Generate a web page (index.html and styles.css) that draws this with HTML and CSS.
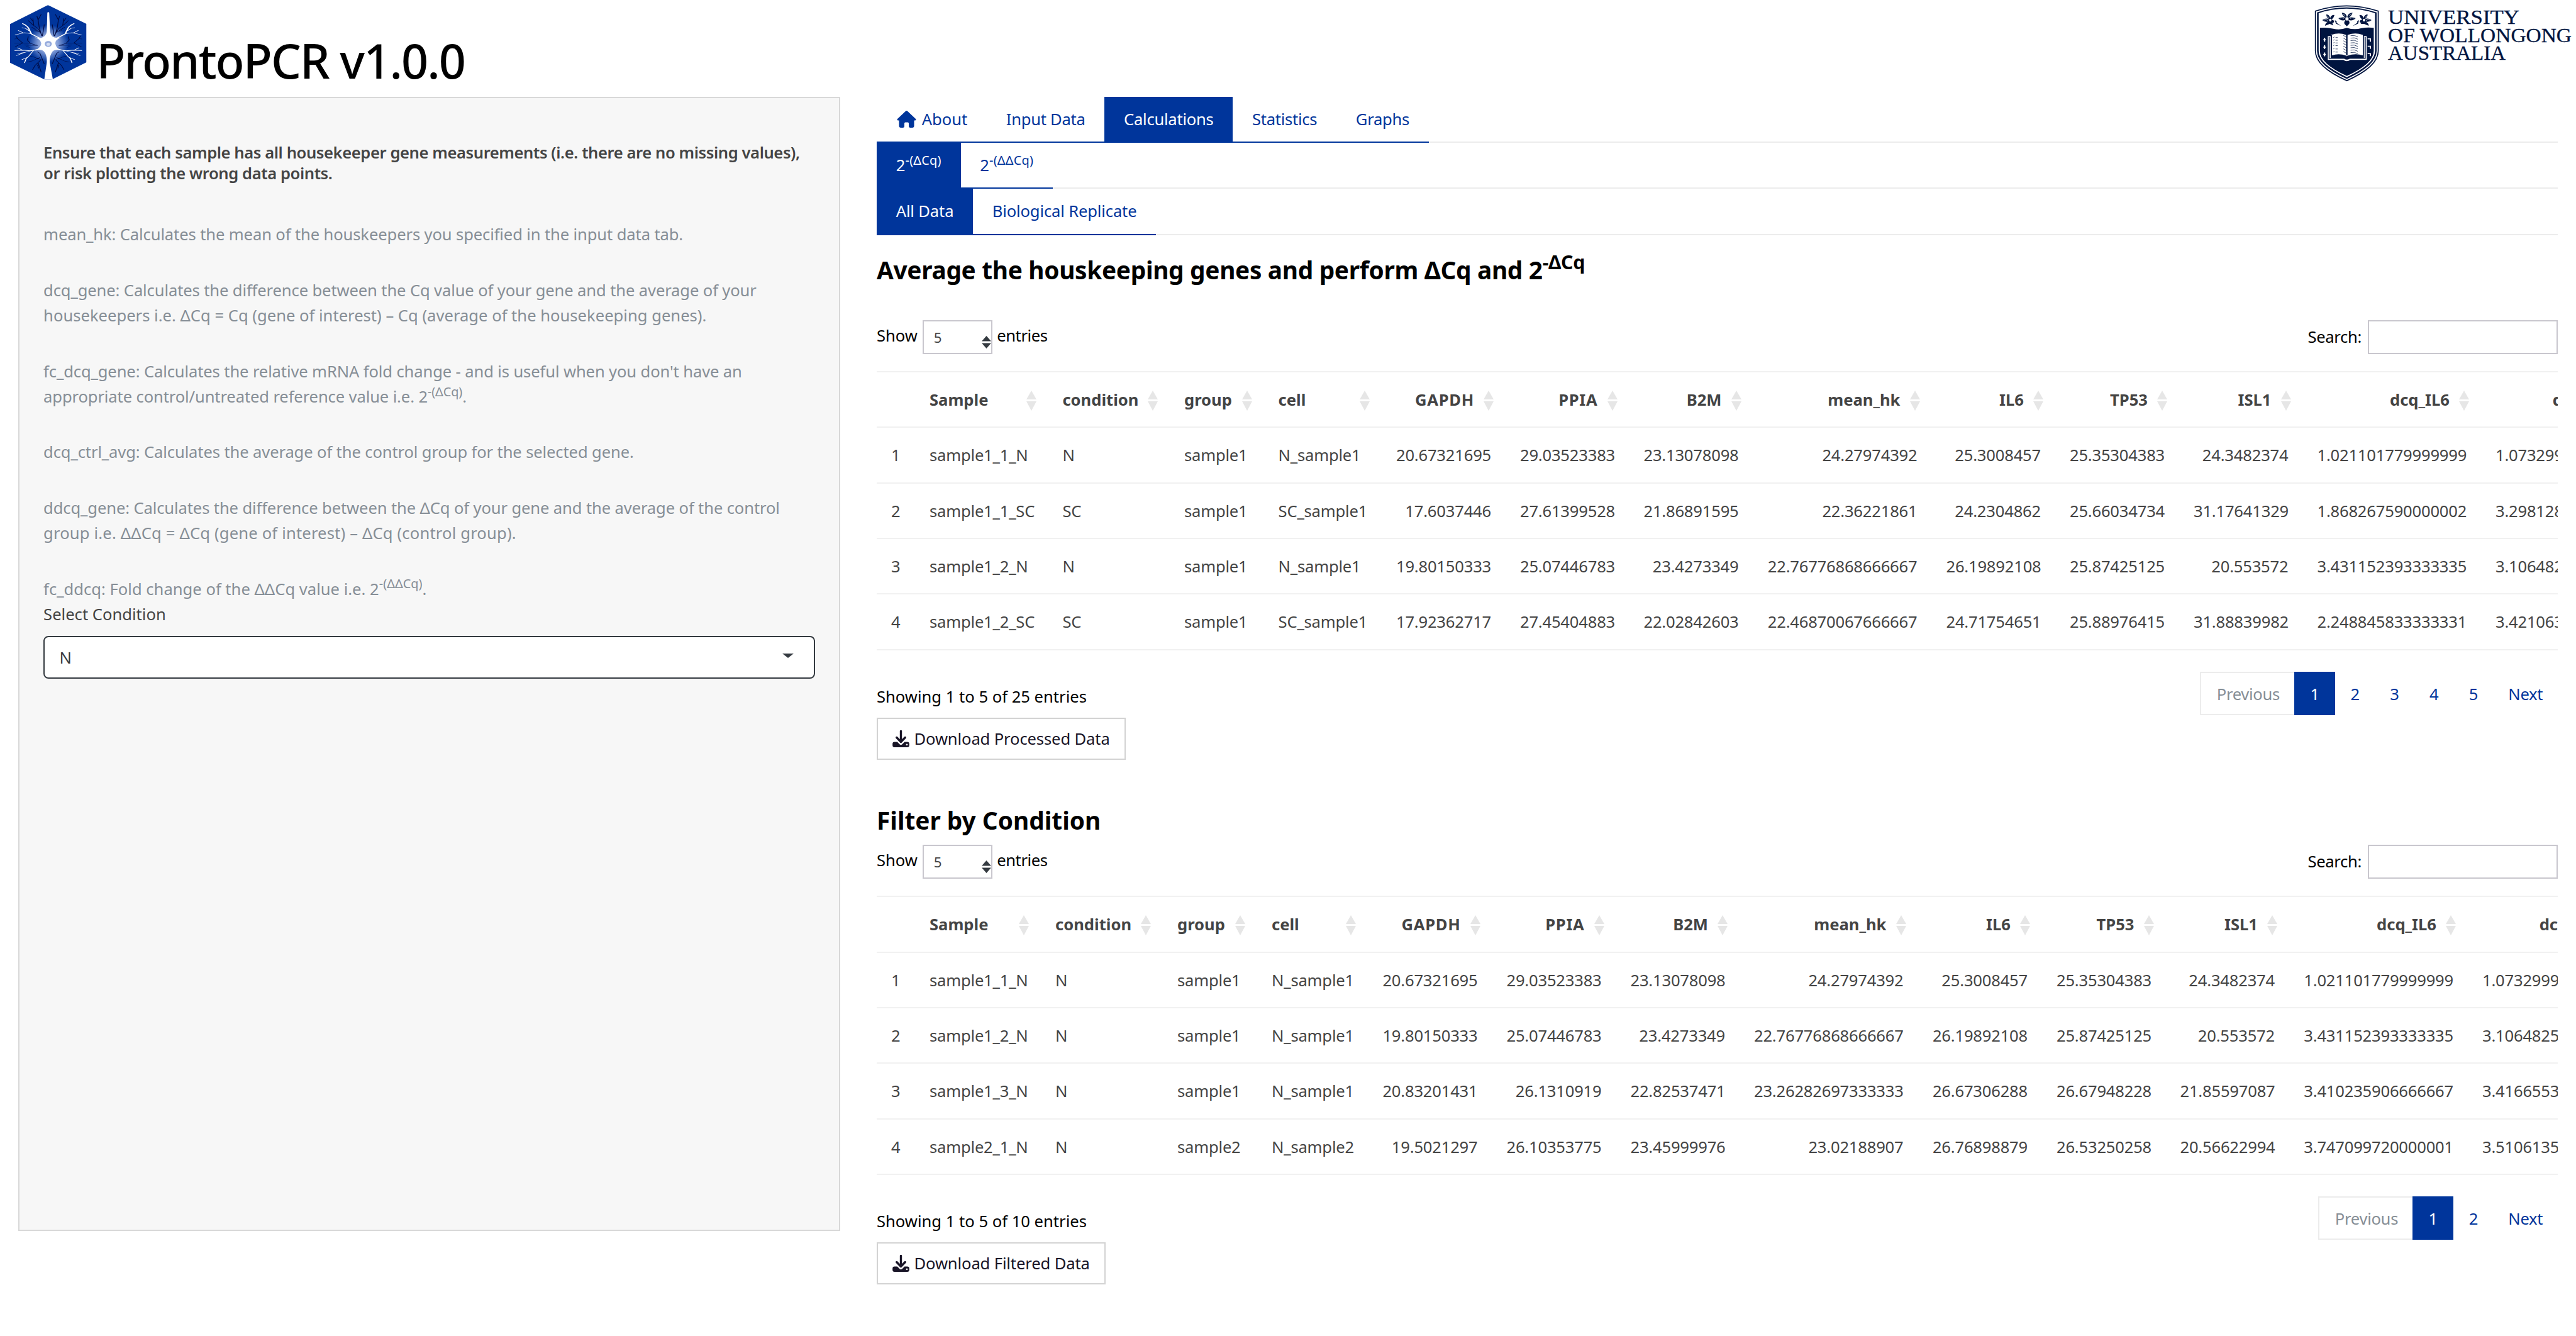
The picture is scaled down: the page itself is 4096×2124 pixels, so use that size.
FILE: index.html
```html
<!DOCTYPE html>
<html lang="en">
<head>
<meta charset="utf-8">
<title>ProntoPCR</title>
<link rel="stylesheet" href="styles.css">
</head>
<body>
<svg width="0" height="0" class="defs">
  <defs>
    <symbol id="download" viewBox="0 0 27 27">
      <path d="M13.5 1.5v15M6.8 11.5l6.7 7 6.7-7" fill="none" stroke="#191527" stroke-width="3.4" stroke-linecap="round" stroke-linejoin="round"/>
      <path fill-rule="evenodd" d="M3.4 18.5h4.3l4 4q1.8 1.6 3.6 0l4-4h4.3q3.2 0 3.2 3.2v2.1q0 3.2-3.2 3.2H3.4Q.2 27 .2 23.8v-2.1q0-3.2 3.2-3.2zM23 21.4a1.4 1.4 0 1 0 .01 0z" fill="#191527"/>
    </symbol>
  </defs>
</svg>
<header class="header">
  <div class="brand">
    <svg class="brand-logo" viewBox="33 39 248 569" preserveAspectRatio="none">
      <defs>
        <radialGradient id="glow" cx="157" cy="325" r="1" gradientUnits="userSpaceOnUse" gradientTransform="translate(157 325) scale(66 140) translate(-157 -325)">
          <stop offset="0" stop-color="#cfdcf5"/><stop offset=".5" stop-color="#7f9ad6"/><stop offset="1" stop-color="#00359b"/>
        </radialGradient>
        <g id="dark-half">
          <path d="M176 270L190 215L208 185L222 155M180 108L190 150L186 210L178 270M190 150L194 120M207 140L204 190M215 135L207 160M200 230L188 236M176 270L170 185M210 205L186 240"/>
          <path d="M192 340L215 325L240 322L266 322M215 325L225 300L222 275M240 322L256 290L266 292M256 290L262 270M240 322L264 350M228 348L218 355M192 340L234 338"/>
          <path d="M170 478L184 400L192 388M176 450L200 430L222 415M184 430L208 455L225 465M182 450L200 490L208 522M190 470L180 540M192 486L188 510"/>
        </g>
        <g id="white-half">
          <path stroke-width="4.5" d="M172 300Q195 275 212 254L221 212Q226 192 240 178"/>
          <path stroke-width="3" d="M212 254Q235 240 243 250L264 261M238 247L254 229M220 230L230 214L242 208"/>
          <path stroke-width="4.5" d="M172 355Q190 372 214 380L240 376L265 378"/>
          <path stroke-width="3" d="M205 378L220 420L229 440L234 470M225 430L242 446M214 380L238 396L260 416M236 394L256 400M240 376L256 358"/>
        </g>
      </defs>
      <path d="M156 39L281 180V466L157 608L33 469V181Z" fill="#00359b"/>
      <ellipse cx="157" cy="325" rx="66" ry="140" fill="url(#glow)"/>
      <g class="dendrites dark"><use href="#dark-half"/><use href="#dark-half" transform="translate(314 0) scale(-1 1)"/></g>
      <path fill="#fff" d="M154 95Q157 88 160 95L163 240Q166 285 186 284L198 282Q178 300 180 328Q182 362 200 378Q178 365 171 385Q160 420 162 470L172 595L157 610L144 595L152 470Q154 415 143 385Q134 365 114 380Q136 350 134 322Q132 292 112 280L132 286Q150 275 152 240Z"/>
      <g class="dendrites white"><use href="#white-half"/><use href="#white-half" transform="translate(314 0) scale(-1 1)"/></g>
      <ellipse cx="157" cy="329" rx="11.5" ry="22" fill="#93a9dc"/><ellipse cx="157" cy="331" rx="6" ry="12" fill="#d5def3"/>
    </svg>
    <h1 class="title">ProntoPCR v1.0.0</h1>
  </div>
  <svg class="uow" viewBox="0 0 416 140">
    <g transform="translate(-32 0) scale(.28533 .21333)">
      <path class="navy" d="M115 80Q290 0 471 80V380Q471 500 293 606Q115 500 115 380Z"/>
      <path class="paper" d="M121 86Q290 10 465 86V380Q465 494 293 596Q121 494 121 380Z"/>
      <path class="navy" d="M127 92Q290 17 459 92V380Q459 488 293 588Q127 488 127 380Z"/>
      <path class="paper" d="M136 98Q290 32 450 98V380Q450 478 293 575Q136 478 136 380Z"/>
      <path class="navy" d="M143 208Q180 202 218 214Q256 226 293 207Q335 226 375 210Q410 202 443 208V380Q443 475 293 566Q143 475 143 380Z"/>
      <g class="navy">
        <path d="M293 138Q268 120 265 95Q290 95 294 130Q300 95 325 95Q320 120 296 140Q318 118 342 136Q325 160 300 148Q312 165 306 178L293 196L280 178Q275 165 287 148Q262 160 246 136Q270 118 293 138Z"/>
        <ellipse cx="294" cy="141" rx="9" ry="13" fill="#fff"/>
        <path d="M254 135Q265 128 276 137M334 135Q322 128 312 137M272 102L283 118M318 102L306 118" class="thin-paper"/>
      </g>
      <g class="navy">
        <path d="M196 145Q178 128 178 108Q196 108 200 135Q206 110 224 112Q220 135 208 146Q224 148 222 165L212 172L218 190L198 178L172 192Q172 172 188 162Q170 166 156 150Q176 130 196 145Z"/>
        <path d="M391 145Q409 128 409 108Q391 108 387 135Q381 110 363 112Q367 135 379 146Q363 148 365 165L375 172L369 178L389 178L415 192Q415 172 399 162Q417 166 431 150Q411 130 391 145Z"/>
        <ellipse cx="201" cy="150" rx="7" ry="10" fill="#fff"/><ellipse cx="389" cy="150" rx="7" ry="10" fill="#fff"/>
        <path d="M226 150L236 158V170L262 195L232 176Z M361 150L351 158V170L325 195L356 176Z"/>
        <path d="M164 150Q178 142 188 152M182 116L192 130M424 150Q410 142 400 152M405 116L396 130" class="thin-paper"/>
      </g>
      <path class="paper" d="M187 270H205V260Q250 240 288 260L293 268L298 260Q340 240 382 260V270H404V446H312Q293 466 274 446H187Z"/>
      <path class="navy" d="M192 276H197V432H392V276H398V438H308Q293 450 279 438H192Z"/>
      <path class="navy" d="M203 262H210V412Q250 395 290 415L293 420L297 415Q340 395 382 412V262H388V434H312Q293 448 276 434H203Z"/>
      <path class="navy" d="M289 262H297V412H289Z"/>
      <g class="script">
        <path d="M218 280l6-5M218 300l6-5M218 320l6-5M218 340l6-5M218 365l6-5M218 388l6-5M230 280h12M230 300h12M230 320h12M230 340h12M230 365h12M230 388h12"/>
        <path d="M274 264l18 14M274 284l18 14M274 304l18 14M274 324l18 14M274 344l18 14M274 364l18 14M274 384l18 14"/>
        <path d="M314 266q20-8 40 8M314 284q20-8 40 8M314 302q20-8 40 8M314 320q20-8 40 8M314 338q20-8 40 8M314 356q20-8 40 8M314 374q20-8 40 8M314 392q20-8 40 8"/>
      </g>
      <g class="clasps">
        <path d="M162 297h14M169 282v29M162 351h14M169 336v29M162 406h14M169 391v29"/>
        <path d="M409 290h15v20M409 345h15v18M409 400h15v18"/>
      </g>
    </g>
    <text class="uow-text" x="117" y="38.1" textLength="209" lengthAdjust="spacingAndGlyphs">UNIVERSITY</text>
    <text class="uow-text" x="117" y="66.7" textLength="292" lengthAdjust="spacingAndGlyphs">OF WOLLONGONG</text>
    <text class="uow-text" x="117" y="95.3" textLength="187" lengthAdjust="spacingAndGlyphs">AUSTRALIA</text>
  </svg>
</header>

<div class="layout">
  <aside class="sidebar">
    <h5 class="warning">Ensure that each sample has all housekeeper gene measurements (i.e. there are no missing values),<br>or risk plotting the wrong data points.</h5>
    <p class="help">mean_hk: Calculates the mean of the houskeepers you specified in the input data tab.</p>
    <p class="help">dcq_gene: Calculates the difference between the Cq value of your gene and the average of your<br><span class="formula">housekeepers i.e. ΔCq = Cq (gene of interest) – Cq (average of the housekeeping genes).</span></p>
    <p class="help">fc_dcq_gene: Calculates the relative mRNA fold change - and is useful when you don't have an<br>appropriate control/untreated reference value i.e. 2<sup>-(ΔCq)</sup>.</p>
    <p class="help">dcq_ctrl_avg: Calculates the average of the control group for the selected gene.</p>
    <p class="help">ddcq_gene: Calculates the difference between the ΔCq of your gene and the average of the control<br><span class="formula wide">group i.e. ΔΔCq = ΔCq (gene of interest) – ΔCq (control group).</span></p>
    <p class="help last"><span class="formula">fc_ddcq: Fold change of the ΔΔCq value i.e. 2<sup>-(ΔΔCq)</sup>.</span></p>
    <label class="field-label">Select Condition</label>
    <div class="select"><span>N</span><i class="caret"></i></div>
  </aside>

  <main class="content">
    <nav class="tabs">
      <a class="tab tab-about"><svg class="home" viewBox="0 0 31 27"><path d="M15.5 0Q16.3 0 17 .7L30 13Q31.5 15.5 28.5 15.5H27.5V24Q27.5 27 24.5 27H21.5Q19 27 19 24.5V20Q19 18.5 17.5 18.5H13.5Q12 18.5 12 20V24.5Q12 27 9.500 27H6.5Q3.5 27 3.5 24V15.5H2.5Q-.5 15.5 1 13L14 .7Q14.7 0 15.5 0Z"/></svg>About</a>
      <a class="tab">Input Data</a>
      <a class="tab active">Calculations</a>
      <a class="tab">Statistics</a>
      <a class="tab">Graphs</a>
    </nav>
    <nav class="tabs tabs-power">
      <a class="tab active"><span>2<sup>-(ΔCq)</sup></span></a>
      <a class="tab"><span>2<sup>-(ΔΔCq)</sup></span></a>
    </nav>
    <nav class="tabs tabs-scope">
      <a class="tab active">All Data</a>
      <a class="tab">Biological Replicate</a>
    </nav>

    <section class="panel">
      <h4 class="heading heading-formula">Average the houskeeping genes and perform ΔCq and 2<sup>-ΔCq</sup></h4>
      <div class="controls controls-first">
        <div class="length"><span>Show</span><span class="length-select">5<svg viewBox="0 0 15 20"><path d="M7.5 0L15 8.5H0zM7.5 20L15 11.5H0z"/></svg></span><span class="unit">entries</span></div>
        <div class="search"><span>Search:</span><span class="search-box"></span></div>
      </div>
      <div class="table table-all">
        <div class="row head"><b></b><b>Sample</b><b>condition</b><b>group</b><b>cell</b><b class="caps">GAPDH</b><b class="caps">PPIA</b><b>B2M</b><b>mean_hk</b><b>IL6</b><b>TP53</b><b>ISL1</b><b>dcq_IL6</b><b>dcq_TP53</b></div>
        <div class="row"><i>1</i><i>sample1_1_N</i><i>N</i><i>sample1</i><i>N_sample1</i><i>20.67321695</i><i>29.03523383</i><i>23.13078098</i><i>24.27974392</i><i>25.3008457</i><i>25.35304383</i><i>24.3482374</i><i>1.021101779999999</i><i>1.0732999</i></div>
        <div class="row"><i>2</i><i>sample1_1_SC</i><i>SC</i><i>sample1</i><i>SC_sample1</i><i>17.6037446</i><i>27.61399528</i><i>21.86891595</i><i>22.36221861</i><i>24.2304862</i><i>25.66034734</i><i>31.17641329</i><i>1.868267590000002</i><i>3.298128</i></div>
        <div class="row"><i>3</i><i>sample1_2_N</i><i>N</i><i>sample1</i><i>N_sample1</i><i>19.80150333</i><i>25.07446783</i><i>23.4273349</i><i>22.76776868666667</i><i>26.19892108</i><i>25.87425125</i><i>20.553572</i><i>3.431152393333335</i><i>3.106482</i></div>
        <div class="row"><i>4</i><i>sample1_2_SC</i><i>SC</i><i>sample1</i><i>SC_sample1</i><i>17.92362717</i><i>27.45404883</i><i>22.02842603</i><i>22.46870067666667</i><i>24.71754651</i><i>25.88976415</i><i>31.88839982</i><i>2.248845833333331</i><i>3.421063</i></div>
      </div>
      <div class="footer">
        <div class="footer-info"><div class="info">Showing 1 to 5 of 25 entries</div><a class="button"><svg><use href="#download"/></svg>Download Processed Data</a></div>
        <div class="pager"><a class="off">Previous</a><a class="on">1</a><a>2</a><a>3</a><a>4</a><a>5</a><a>Next</a></div>
      </div>
    </section>

    <section class="panel panel-filter">
      <h4 class="heading">Filter by Condition</h4>
      <div class="controls">
        <div class="length"><span>Show</span><span class="length-select">5<svg viewBox="0 0 15 20"><path d="M7.5 0L15 8.5H0zM7.5 20L15 11.5H0z"/></svg></span><span class="unit">entries</span></div>
        <div class="search"><span>Search:</span><span class="search-box"></span></div>
      </div>
      <div class="table table-filtered">
        <div class="row head"><b></b><b>Sample</b><b>condition</b><b>group</b><b>cell</b><b class="caps">GAPDH</b><b class="caps">PPIA</b><b>B2M</b><b>mean_hk</b><b>IL6</b><b>TP53</b><b>ISL1</b><b>dcq_IL6</b><b>dcq_TP53</b></div>
        <div class="row"><i>1</i><i>sample1_1_N</i><i>N</i><i>sample1</i><i>N_sample1</i><i>20.67321695</i><i>29.03523383</i><i>23.13078098</i><i>24.27974392</i><i>25.3008457</i><i>25.35304383</i><i>24.3482374</i><i>1.021101779999999</i><i>1.0732999</i></div>
        <div class="row"><i>2</i><i>sample1_2_N</i><i>N</i><i>sample1</i><i>N_sample1</i><i>19.80150333</i><i>25.07446783</i><i>23.4273349</i><i>22.76776868666667</i><i>26.19892108</i><i>25.87425125</i><i>20.553572</i><i>3.431152393333335</i><i>3.1064825</i></div>
        <div class="row"><i>3</i><i>sample1_3_N</i><i>N</i><i>sample1</i><i>N_sample1</i><i>20.83201431</i><i>26.1310919</i><i>22.82537471</i><i>23.26282697333333</i><i>26.67306288</i><i>26.67948228</i><i>21.85597087</i><i>3.410235906666667</i><i>3.4166553</i></div>
        <div class="row"><i>4</i><i>sample2_1_N</i><i>N</i><i>sample2</i><i>N_sample2</i><i>19.5021297</i><i>26.10353775</i><i>23.45999976</i><i>23.02188907</i><i>26.76898879</i><i>26.53250258</i><i>20.56622994</i><i>3.747099720000001</i><i>3.5106135</i></div>
      </div>
      <div class="footer">
        <div class="footer-info"><div class="info">Showing 1 to 5 of 10 entries</div><a class="button"><svg><use href="#download"/></svg>Download Filtered Data</a></div>
        <div class="pager"><a class="off">Previous</a><a class="on">1</a><a>2</a><a>Next</a></div>
      </div>
    </section>
  </main>
</div>
</body>
</html>
```
FILE: styles.css
```css
* { box-sizing: border-box; }
body {
  margin: 0;
  width: 4096px;
  height: 2124px;
  overflow: hidden;
  background: #fff;
  color: #000;
  font-family: "Noto Sans", "Open Sans", sans-serif;
  font-size: 25.6px;
  white-space: nowrap;
}
h1, h4, h5, p { margin: 0; }
sup { font-size: 78%; line-height: 0; vertical-align: baseline; position: relative; top: -.52em; }
.defs { display: block; position: absolute; }

.header { display: flex; justify-content: space-between; height: 153.7px; }
.brand { display: flex; padding-left: 16px; }
.brand-logo { display: block; width: 121.5px; height: 121.3px; margin-top: 8.3px; clip-path: inset(0 0 3px 0); }
.dendrites { fill: none; stroke-linecap: round; stroke-linejoin: round; }
.dendrites path { vector-effect: non-scaling-stroke; }
.dark { stroke: #000c46; stroke-width: 2.6px; }
.white { stroke: #fff; }
.title { margin-left: 16px; padding-top: 50px; font-size: 75.5px; line-height: 92.2px; font-weight: 500; letter-spacing: -1.95px; }
.uow { display: block; width: 416px; height: 140px; }
.navy { fill: #00143f; }
.paper { fill: #fff; }
.thin-paper { fill: none; stroke: #fff; stroke-width: 3; }
.script { fill: none; stroke: #00143f; stroke-width: 3; }
.clasps { fill: none; stroke: #fff; stroke-width: 7; }
.uow-text { font-family: "Liberation Serif", serif; font-size: 31px; fill: #00143f; stroke: #00143f; stroke-width: .3px; }

.layout { display: flex; align-items: flex-start; }
.sidebar {
  width: 1307.8px;
  height: 1803.8px;
  margin-left: 28.7px;
  padding: 71.7px 38.4px 0;
  border: 2px solid #d8d8d8;
  background: #f7f7f7;
}
.warning { line-height: 32.26px; font-size: 25.6px; font-weight: 600; letter-spacing: -.42px; color: #444; margin-bottom: 61.4px; }
.help { line-height: 40.32px; letter-spacing: -.13px; color: #868e96; margin-bottom: 48.2px; }
.formula { letter-spacing: 0; }
.formula.wide { letter-spacing: .16px; }
.help.last { margin-bottom: 0; }
.field-label { display: block; line-height: 40.32px; color: #444; }
.select {
  display: flex;
  align-items: center;
  justify-content: space-between;
  height: 67.3px;
  margin-top: 13.9px;
  padding: 0 32px 0 23.5px;
  border: 2px solid #343a40;
  border-radius: 8px;
  background: #fff;
  color: #343a40;
}
.select span { padding-top: 2px; }
.caret { border: 9px solid transparent; border-top: 7px solid #343a40; border-bottom: 0; margin-top: -5px; }

.content { width: 2673.5px; margin-left: 57.5px; }
.tabs { display: flex; height: 73.4px; box-shadow: inset 0 -2px #ececec; letter-spacing: -.27px; }
.tabs-power { letter-spacing: .2px; }
.tabs-scope { letter-spacing: -.15px; }
.tab {
  display: flex;
  padding: 0 30.72px;
  line-height: 72px;
  border-bottom: 2.3px solid #00359b;
  color: #00359b;
}
.tab-about { letter-spacing: 0; }
.tab.active { background: #00359b; color: #fff; }
.home { width: 31px; height: 27px; margin: 22.3px 9px 0 1px; fill: #00359b; }
.heading { margin-top: 31.3px; font-size: 38.8px; line-height: 48.4px; font-weight: 700; }
.heading-formula { letter-spacing: -.31px; }
.panel-filter .heading { margin-top: 71.8px; }
.controls { display: flex; justify-content: space-between; height: 54.2px; margin-top: 14.5px; }
.controls-first { margin-top: 55px; }
.length { display: flex; line-height: 49.4px; }
.length-select {
  display: flex;
  justify-content: space-between;
  width: 111.4px;
  height: 54.2px;
  margin: 0 7px 0 7.8px;
  padding-left: 16px;
  border: 2px solid #c9c7ce;
  font-size: 22.4px;
  line-height: 52px;
  color: #444;
}
.length-select svg { width: 15px; height: 20px; margin-top: 23px; fill: #343a40; }
.unit { letter-spacing: -.4px; }
.search { display: flex; line-height: 53.6px; letter-spacing: -.35px; }
.search-box { width: 302px; height: 54.4px; margin-left: 10.5px; border: 2px solid #c9c7ce; }

.table { margin-top: 27.4px; overflow: hidden; border-bottom: 2px solid #f1f1f1; color: #444; letter-spacing: -.2px; }
.row { display: grid; height: 88.32px; border-top: 2px solid #f1f1f1; line-height: 87.6px; }
.table-all .row { grid-template-columns: 61px 211.4px 193.6px 149.6px 187.4px 197px 196.5px 197px 284px 196.5px 197px 196.5px 283.5px 283.5px; }
.table-filtered .row { grid-template-columns: 61px 200px 194px 150px 176px 197.5px 197px 196.5px 283.5px 197.5px 196.5px 196.5px 284px 261px; }
.row > * { padding: 0 23px; font-style: normal; text-align: right; }
.row > :nth-child(-n+5) { text-align: left; }
.row > i:last-child { text-align: left; }
.head > b { position: relative; padding-right: 50px; font-weight: 700; letter-spacing: 0; }
.head > .caps { letter-spacing: .7px; }
.head > b:last-child { padding: 0 0 0 113.7px; text-align: left; }
.head > b:not(:first-child)::before, .head > b:not(:first-child)::after {
  content: "";
  position: absolute;
  right: 18.7px;
  border: 8.7px solid transparent;
}
.head > b::before { top: 29px; border-top: 0 !important; border-bottom: 14.8px solid #e6e6e6 !important; }
.head > b::after { top: 45.9px; border-bottom: 0 !important; border-top: 15px solid #e6e6e6 !important; }

.footer { display: flex; justify-content: space-between; align-items: flex-start; padding-top: 34.5px; }
.footer-info { padding-top: 19.9px; }
.info { line-height: 40.32px; }
.button {
  display: inline-flex;
  height: 67.5px;
  margin-top: 12.1px;
  padding: 0 23px;
  border: 2px solid #d3d3d3;
  line-height: 64px;
  letter-spacing: -.13px;
  color: #191527;
}
.button svg { width: 27px; height: 27px; margin: 18.5px 7.5px 0 0; }
.pager { display: flex; line-height: 71px; letter-spacing: -.3px; color: #00359b; }
.pager a { height: 68.4px; padding: 0 24.2px; }
.pager .off { color: #868e96; border: 2px solid #ececec; border-right: 0; padding: 0 23px 0 25px; line-height: 67px; }
.pager .on { background: #00359b; color: #fff; padding: 0 25.5px; }
```
